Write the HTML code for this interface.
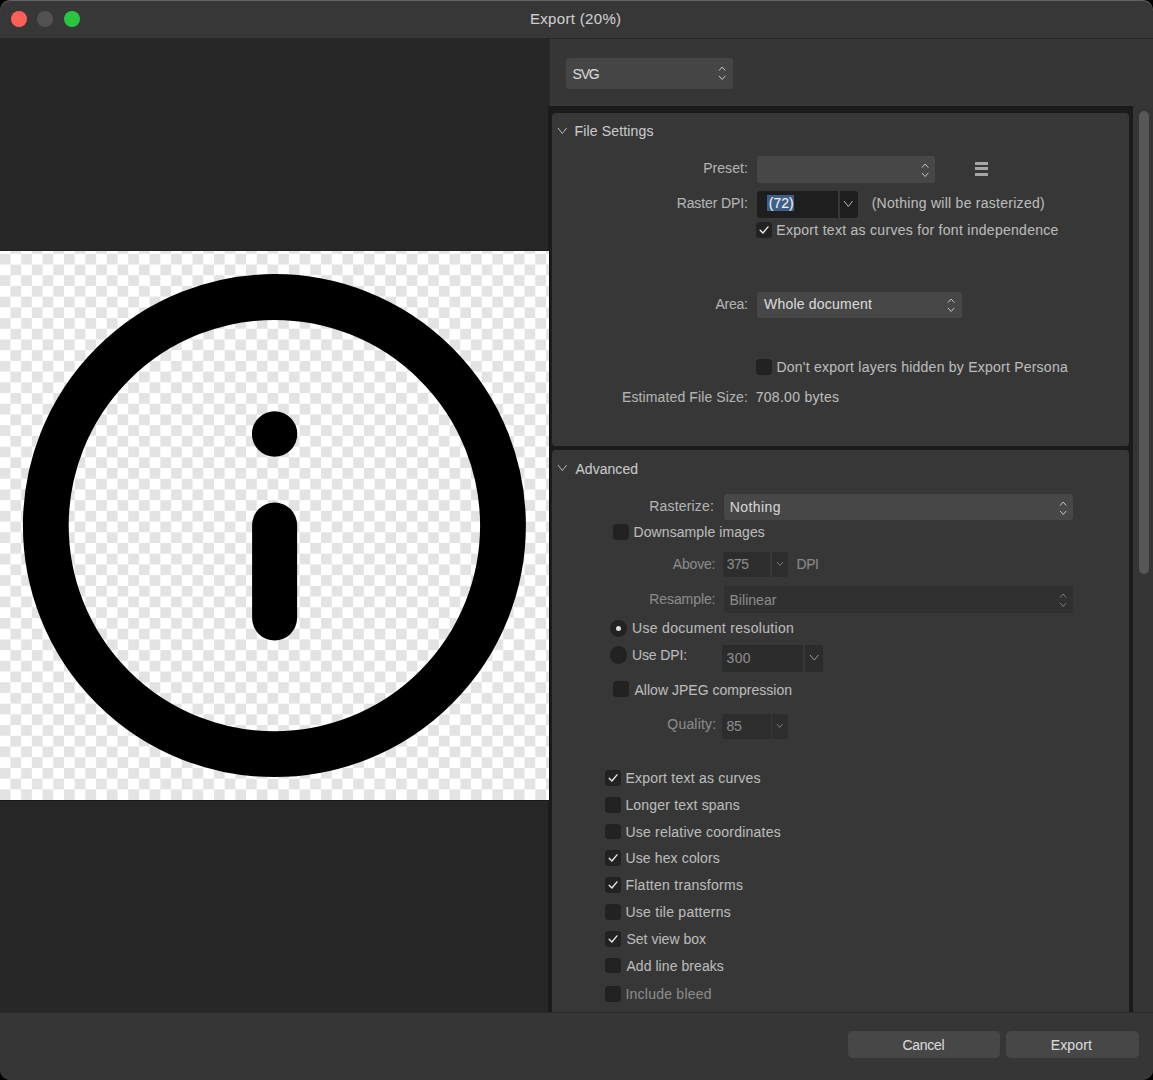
<!DOCTYPE html><html><head><meta charset="utf-8"><style>
html,body{margin:0;padding:0;background:#000;width:1153px;height:1080px;overflow:hidden}
body{font-family:"Liberation Sans",sans-serif;position:relative}
.t{position:absolute;white-space:nowrap;-webkit-text-stroke:0.1px currentColor}
.r{position:absolute}
#win{position:absolute;left:0;top:0;width:1153px;height:1080px;border-radius:10px;overflow:hidden;background:#363636}
</style></head><body><div id="win">
<div class="r" style="left:0.00px;top:0.00px;width:1153.00px;height:38.00px;background:#373737;border-radius:0px;"></div>
<div class="r" style="left:0.00px;top:38.00px;width:1153.00px;height:1.00px;background:#262626;border-radius:0px;"></div>
<div class="r" style="left:0;top:0;width:1153px;height:1080px;border-radius:10px;box-shadow:inset 0 1px 0 rgba(255,255,255,0.22);z-index:5"></div>
<div class="r" style="left:10.70px;top:10.60px;width:16.20px;height:16.20px;background:#fe5f57;border-radius:8.1px;"></div>
<div class="r" style="left:37.20px;top:10.60px;width:16.20px;height:16.20px;background:#525252;border-radius:8.1px;"></div>
<div class="r" style="left:64.20px;top:10.60px;width:16.20px;height:16.20px;background:#29c740;border-radius:8.1px;"></div>
<div class="t" style="left:529.90px;top:11.20px;font-size:15px;line-height:15px;letter-spacing:0.333px;color:#cdcdcd">Export (20%)</div>
<div class="r" style="left:0.00px;top:39.00px;width:550.00px;height:973.00px;background:#272727;border-radius:0px;"></div>
<div class="r" style="left:550.00px;top:39.00px;width:603.00px;height:67.30px;background:#363636;border-radius:0px;"></div>
<div class="r" style="left:548.00px;top:106.30px;width:585.00px;height:905.70px;background:#1b1b1b;border-radius:0px;"></div>
<div class="r" style="left:1133.00px;top:106.30px;width:20.00px;height:905.70px;background:#353535;border-radius:0px;"></div>
<div class="r" style="left:1138.70px;top:110.90px;width:10.20px;height:462.80px;background:#575757;border-radius:5.1px;"></div>
<div class="r" style="left:0.00px;top:250.50px;width:549.00px;height:549.00px;background:#ffffff;border-radius:0px;background-image:conic-gradient(#ffffff 0 25%, #e3e3e3 0 50%, #ffffff 0 75%, #e3e3e3 0);background-size:21.432px 21.432px;background-position:-0.3px 2.8px;"></div>
<svg class="r" style="left:0;top:250.5px" width="549" height="549"><g transform="translate(0,-250.5)"><circle cx="274.4" cy="525.1" r="228.6" fill="none" stroke="#000" stroke-width="45.8"/><circle cx="274.6" cy="433.5" r="22.7" fill="#000"/><line x1="274.6" y1="524.5" x2="274.6" y2="617.5" stroke="#000" stroke-width="45" stroke-linecap="round"/></g></svg>
<div class="r" style="left:549.00px;top:250.50px;width:1.00px;height:549.00px;background:#0e0e0e;border-radius:0px;"></div>
<div class="r" style="left:0.00px;top:249.50px;width:549.00px;height:1.00px;background:#1f1f1f;border-radius:0px;"></div>
<div class="r" style="left:0.00px;top:799.50px;width:549.00px;height:1.00px;background:#1a1a1a;border-radius:0px;"></div>
<div class="r" style="left:566.00px;top:58.20px;width:166.70px;height:30.40px;background:#454545;border-radius:3px;"></div>
<div class="t" style="left:572.50px;top:66.85px;font-size:14px;line-height:14px;letter-spacing:-1.188px;color:#d6d6d6">SVG</div>
<svg class="r" style="left:717.35px;top:65.25px;overflow:visible" width="10.30" height="16.50"><path d="M2 5.60 L5.15 2 L8.30 5.60 M2 10.90 L5.15 14.50 L8.30 10.90" fill="none" stroke="#c4c4c4" stroke-width="1.0"/></svg>
<div class="r" style="left:552.00px;top:112.60px;width:577.20px;height:333.10px;background:#373737;border-radius:3.5px;"></div>
<svg class="r" style="left:556.30px;top:125.70px;overflow:visible" width="12.60" height="9.60"><path d="M2 2 L6.30 7.60 L10.60 2" fill="none" stroke="#b8b8b8" stroke-width="1.0"/></svg>
<div class="t" style="left:574.50px;top:124.15px;font-size:14px;line-height:14px;letter-spacing:0.164px;color:#c8c8c8">File Settings</div>
<div class="t" style="left:703.20px;top:161.35px;font-size:14px;line-height:14px;letter-spacing:0.040px;color:#b2b2b2">Preset:</div>
<div class="r" style="left:757.30px;top:156.10px;width:177.80px;height:26.70px;background:#474747;border-radius:3px;"></div>
<svg class="r" style="left:919.55px;top:161.90px;overflow:visible" width="10.30" height="16.50"><path d="M2 5.60 L5.15 2 L8.30 5.60 M2 10.90 L5.15 14.50 L8.30 10.90" fill="none" stroke="#c4c4c4" stroke-width="1.0"/></svg>
<div class="r" style="left:975.00px;top:162.00px;width:13.20px;height:2.85px;background:#a6a6a6;border-radius:0.3px;"></div>
<div class="r" style="left:975.00px;top:167.20px;width:13.20px;height:2.85px;background:#a6a6a6;border-radius:0.3px;"></div>
<div class="r" style="left:975.00px;top:172.90px;width:13.20px;height:2.85px;background:#a6a6a6;border-radius:0.3px;"></div>
<div class="t" style="left:676.70px;top:196.35px;font-size:14px;line-height:14px;letter-spacing:-0.116px;color:#b2b2b2">Raster DPI:</div>
<div class="r" style="left:757.30px;top:191.00px;width:80.50px;height:26.70px;background:#1e1e1e;border-radius:3px;border-top-right-radius:0;border-bottom-right-radius:0;"></div>
<div class="r" style="left:839.80px;top:191.00px;width:18.10px;height:26.70px;background:#1e1e1e;border-radius:3px;border-top-left-radius:0;border-bottom-left-radius:0;"></div>
<div class="r" style="left:766.90px;top:195.20px;width:27.30px;height:15.80px;background:#3e5f89;border-radius:0px;"></div>
<div class="t" style="left:768.80px;top:196.35px;font-size:14px;line-height:14px;letter-spacing:-0.045px;color:#f0f0f0">(72)</div>
<svg class="r" style="left:842.30px;top:198.90px;overflow:visible" width="12.60" height="9.50"><path d="M2 2 L6.30 7.50 L10.60 2" fill="none" stroke="#b8b8b8" stroke-width="1.0"/></svg>
<div class="t" style="left:871.70px;top:196.35px;font-size:14px;line-height:14px;letter-spacing:0.268px;color:#bababa">(Nothing will be rasterized)</div>
<div class="r" style="left:756.00px;top:222.00px;width:16.00px;height:16.00px;background:#222222;border-radius:3.5px;"></div>
<svg class="r" style="left:756.00px;top:222.00px" width="16" height="16"><path d="M4.2 8.3 L6.9 11.0 L12.0 4.9" fill="none" stroke="#e6e6e6" stroke-width="1.4" stroke-linecap="round" stroke-linejoin="round"/></svg>
<div class="t" style="left:776.30px;top:223.05px;font-size:14px;line-height:14px;letter-spacing:0.287px;color:#bababa">Export text as curves for font independence</div>
<div class="t" style="left:715.40px;top:297.15px;font-size:14px;line-height:14px;letter-spacing:-0.243px;color:#b2b2b2">Area:</div>
<div class="r" style="left:757.00px;top:291.70px;width:205.00px;height:26.00px;background:#474747;border-radius:3px;"></div>
<div class="t" style="left:764.00px;top:297.15px;font-size:14px;line-height:14px;letter-spacing:0.210px;color:#d8d8d8">Whole document</div>
<svg class="r" style="left:946.25px;top:297.20px;overflow:visible" width="10.30" height="16.50"><path d="M2 5.60 L5.15 2 L8.30 5.60 M2 10.90 L5.15 14.50 L8.30 10.90" fill="none" stroke="#c4c4c4" stroke-width="1.0"/></svg>
<div class="r" style="left:756.00px;top:358.50px;width:16.00px;height:16.00px;background:#222222;border-radius:3.5px;"></div>
<div class="t" style="left:776.40px;top:359.65px;font-size:14px;line-height:14px;letter-spacing:0.233px;color:#bababa">Don&#39;t export layers hidden by Export Persona</div>
<div class="t" style="left:622.00px;top:390.15px;font-size:14px;line-height:14px;letter-spacing:0.115px;color:#b2b2b2">Estimated File Size:</div>
<div class="t" style="left:755.70px;top:390.15px;font-size:14px;line-height:14px;letter-spacing:0.284px;color:#bababa">708.00 bytes</div>
<div class="r" style="left:552.00px;top:449.80px;width:577.20px;height:650.20px;background:#373737;border-radius:3.5px;"></div>
<svg class="r" style="left:556.30px;top:463.30px;overflow:visible" width="12.60" height="9.60"><path d="M2 2 L6.30 7.60 L10.60 2" fill="none" stroke="#b8b8b8" stroke-width="1.0"/></svg>
<div class="t" style="left:575.50px;top:461.85px;font-size:14px;line-height:14px;letter-spacing:0.031px;color:#c8c8c8">Advanced</div>
<div class="t" style="left:649.30px;top:499.05px;font-size:14px;line-height:14px;letter-spacing:0.163px;color:#b2b2b2">Rasterize:</div>
<div class="r" style="left:724.20px;top:494.20px;width:348.80px;height:26.20px;background:#474747;border-radius:3px;"></div>
<div class="t" style="left:729.70px;top:500.15px;font-size:14px;line-height:14px;letter-spacing:0.422px;color:#d4d4d4">Nothing</div>
<svg class="r" style="left:1057.55px;top:499.65px;overflow:visible" width="10.30" height="16.50"><path d="M2 5.60 L5.15 2 L8.30 5.60 M2 10.90 L5.15 14.50 L8.30 10.90" fill="none" stroke="#c4c4c4" stroke-width="1.0"/></svg>
<div class="r" style="left:613.00px;top:523.50px;width:16.00px;height:16.00px;background:#222222;border-radius:3.5px;"></div>
<div class="t" style="left:633.50px;top:524.95px;font-size:14px;line-height:14px;letter-spacing:0.085px;color:#bababa">Downsample images</div>
<div class="t" style="left:672.80px;top:557.15px;font-size:14px;line-height:14px;letter-spacing:-0.179px;color:#8a8a8a">Above:</div>
<div class="r" style="left:722.60px;top:551.70px;width:47.80px;height:25.30px;background:#2d2d2d;border-radius:3px;border-top-right-radius:0;border-bottom-right-radius:0;"></div>
<div class="r" style="left:771.70px;top:551.70px;width:16.00px;height:25.30px;background:#2d2d2d;border-radius:3px;border-top-left-radius:0;border-bottom-left-radius:0;"></div>
<div class="t" style="left:726.70px;top:557.15px;font-size:14px;line-height:14px;letter-spacing:-0.536px;color:#8a8a8a">375</div>
<svg class="r" style="left:774.50px;top:559.60px;overflow:visible" width="10.00" height="7.50"><path d="M2 2 L5.00 5.50 L8.00 2" fill="none" stroke="#7a7a7a" stroke-width="1.0"/></svg>
<div class="t" style="left:796.50px;top:557.15px;font-size:14px;line-height:14px;letter-spacing:-0.474px;color:#8a8a8a">DPI</div>
<div class="t" style="left:649.30px;top:592.15px;font-size:14px;line-height:14px;letter-spacing:-0.091px;color:#8a8a8a">Resample:</div>
<div class="r" style="left:724.20px;top:586.30px;width:348.80px;height:26.30px;background:#303030;border-radius:3px;"></div>
<div class="t" style="left:729.50px;top:592.65px;font-size:14px;line-height:14px;letter-spacing:0.025px;color:#8a8a8a">Bilinear</div>
<svg class="r" style="left:1057.55px;top:592.20px;overflow:visible" width="10.30" height="16.50"><path d="M2 5.60 L5.15 2 L8.30 5.60 M2 10.90 L5.15 14.50 L8.30 10.90" fill="none" stroke="#7e7e7e" stroke-width="1.0"/></svg>
<div class="r" style="left:610.00px;top:619.80px;width:17.30px;height:17.30px;background:#222222;border-radius:8.65px;"></div>
<div class="r" style="left:616.05px;top:625.85px;width:5.20px;height:5.20px;background:#e0e0e0;border-radius:2.6px;"></div>
<div class="t" style="left:632.00px;top:621.35px;font-size:14px;line-height:14px;letter-spacing:0.315px;color:#bababa">Use document resolution</div>
<div class="r" style="left:610.00px;top:646.40px;width:17.30px;height:17.30px;background:#222222;border-radius:8.65px;"></div>
<div class="t" style="left:632.00px;top:648.15px;font-size:14px;line-height:14px;letter-spacing:-0.132px;color:#bababa">Use DPI:</div>
<div class="r" style="left:722.40px;top:645.00px;width:80.30px;height:26.80px;background:#2c2c2c;border-radius:3px;border-top-right-radius:0;border-bottom-right-radius:0;"></div>
<div class="r" style="left:804.80px;top:645.00px;width:18.60px;height:26.80px;background:#2c2c2c;border-radius:3px;border-top-left-radius:0;border-bottom-left-radius:0;"></div>
<div class="t" style="left:726.60px;top:651.45px;font-size:14px;line-height:14px;letter-spacing:0.264px;color:#8a8a8a">300</div>
<svg class="r" style="left:807.50px;top:652.90px;overflow:visible" width="12.50" height="9.00"><path d="M2 2 L6.25 7.00 L10.50 2" fill="none" stroke="#9a9a9a" stroke-width="1.0"/></svg>
<div class="r" style="left:612.70px;top:681.40px;width:16.00px;height:16.00px;background:#222222;border-radius:3.5px;"></div>
<div class="t" style="left:634.50px;top:682.65px;font-size:14px;line-height:14px;letter-spacing:0.020px;color:#bababa">Allow JPEG compression</div>
<div class="t" style="left:667.30px;top:716.75px;font-size:14px;line-height:14px;letter-spacing:0.204px;color:#8a8a8a">Quality:</div>
<div class="r" style="left:722.40px;top:714.00px;width:48.50px;height:24.60px;background:#2d2d2d;border-radius:3px;border-top-right-radius:0;border-bottom-right-radius:0;"></div>
<div class="r" style="left:772.00px;top:714.00px;width:15.50px;height:24.60px;background:#2d2d2d;border-radius:3px;border-top-left-radius:0;border-bottom-left-radius:0;"></div>
<div class="t" style="left:726.50px;top:719.35px;font-size:14px;line-height:14px;letter-spacing:-0.286px;color:#8a8a8a">85</div>
<svg class="r" style="left:775.00px;top:722.40px;overflow:visible" width="9.50" height="7.50"><path d="M2 2 L4.75 5.50 L7.50 2" fill="none" stroke="#7a7a7a" stroke-width="1.0"/></svg>
<div class="r" style="left:604.90px;top:770.00px;width:15.80px;height:15.80px;background:#222222;border-radius:3.5px;"></div>
<svg class="r" style="left:604.90px;top:770.00px" width="15.8" height="15.8"><path d="M4.2 8.3 L6.9 11.0 L12.0 4.9" fill="none" stroke="#e6e6e6" stroke-width="1.4" stroke-linecap="round" stroke-linejoin="round"/></svg>
<div class="t" style="left:625.40px;top:770.95px;font-size:14px;line-height:14px;letter-spacing:0.224px;color:#bababa">Export text as curves</div>
<div class="r" style="left:604.90px;top:796.80px;width:15.80px;height:15.80px;background:#222222;border-radius:3.5px;"></div>
<div class="t" style="left:625.40px;top:797.75px;font-size:14px;line-height:14px;letter-spacing:0.194px;color:#bababa">Longer text spans</div>
<div class="r" style="left:604.90px;top:823.70px;width:15.80px;height:15.80px;background:#222222;border-radius:3.5px;"></div>
<div class="t" style="left:625.40px;top:824.65px;font-size:14px;line-height:14px;letter-spacing:0.222px;color:#bababa">Use relative coordinates</div>
<div class="r" style="left:604.90px;top:850.20px;width:15.80px;height:15.80px;background:#222222;border-radius:3.5px;"></div>
<svg class="r" style="left:604.90px;top:850.20px" width="15.8" height="15.8"><path d="M4.2 8.3 L6.9 11.0 L12.0 4.9" fill="none" stroke="#e6e6e6" stroke-width="1.4" stroke-linecap="round" stroke-linejoin="round"/></svg>
<div class="t" style="left:625.40px;top:851.15px;font-size:14px;line-height:14px;letter-spacing:0.139px;color:#bababa">Use hex colors</div>
<div class="r" style="left:604.90px;top:877.30px;width:15.80px;height:15.80px;background:#222222;border-radius:3.5px;"></div>
<svg class="r" style="left:604.90px;top:877.30px" width="15.8" height="15.8"><path d="M4.2 8.3 L6.9 11.0 L12.0 4.9" fill="none" stroke="#e6e6e6" stroke-width="1.4" stroke-linecap="round" stroke-linejoin="round"/></svg>
<div class="t" style="left:625.40px;top:878.25px;font-size:14px;line-height:14px;letter-spacing:0.276px;color:#bababa">Flatten transforms</div>
<div class="r" style="left:604.90px;top:904.20px;width:15.80px;height:15.80px;background:#222222;border-radius:3.5px;"></div>
<div class="t" style="left:625.40px;top:905.15px;font-size:14px;line-height:14px;letter-spacing:0.265px;color:#bababa">Use tile patterns</div>
<div class="r" style="left:604.90px;top:931.10px;width:15.80px;height:15.80px;background:#222222;border-radius:3.5px;"></div>
<svg class="r" style="left:604.90px;top:931.10px" width="15.8" height="15.8"><path d="M4.2 8.3 L6.9 11.0 L12.0 4.9" fill="none" stroke="#e6e6e6" stroke-width="1.4" stroke-linecap="round" stroke-linejoin="round"/></svg>
<div class="t" style="left:626.40px;top:932.05px;font-size:14px;line-height:14px;letter-spacing:0.030px;color:#bababa">Set view box</div>
<div class="r" style="left:604.90px;top:957.60px;width:15.80px;height:15.80px;background:#222222;border-radius:3.5px;"></div>
<div class="t" style="left:626.40px;top:958.55px;font-size:14px;line-height:14px;letter-spacing:0.064px;color:#bababa">Add line breaks</div>
<div class="r" style="left:604.90px;top:985.90px;width:15.80px;height:15.80px;background:#222222;border-radius:3.5px;"></div>
<div class="t" style="left:625.40px;top:986.85px;font-size:14px;line-height:14px;letter-spacing:0.241px;color:#8a8a8a">Include bleed</div>
<div class="r" style="left:0.00px;top:1012.00px;width:1153.00px;height:68.00px;background:#363636;border-radius:0px;"></div>
<div class="r" style="left:0.00px;top:1012.00px;width:1153.00px;height:1.00px;background:#2a2a2a;border-radius:0px;"></div>
<div class="r" style="left:848.10px;top:1031.20px;width:151.50px;height:26.80px;background:#474747;border-radius:5px;"></div>
<div class="t" style="left:902.40px;top:1037.65px;font-size:14px;line-height:14px;letter-spacing:-0.294px;color:#d8d8d8">Cancel</div>
<div class="r" style="left:1006.10px;top:1031.20px;width:133.00px;height:26.80px;background:#474747;border-radius:5px;"></div>
<div class="t" style="left:1050.70px;top:1037.65px;font-size:14px;line-height:14px;letter-spacing:0.146px;color:#d8d8d8">Export</div>
</div></body></html>
